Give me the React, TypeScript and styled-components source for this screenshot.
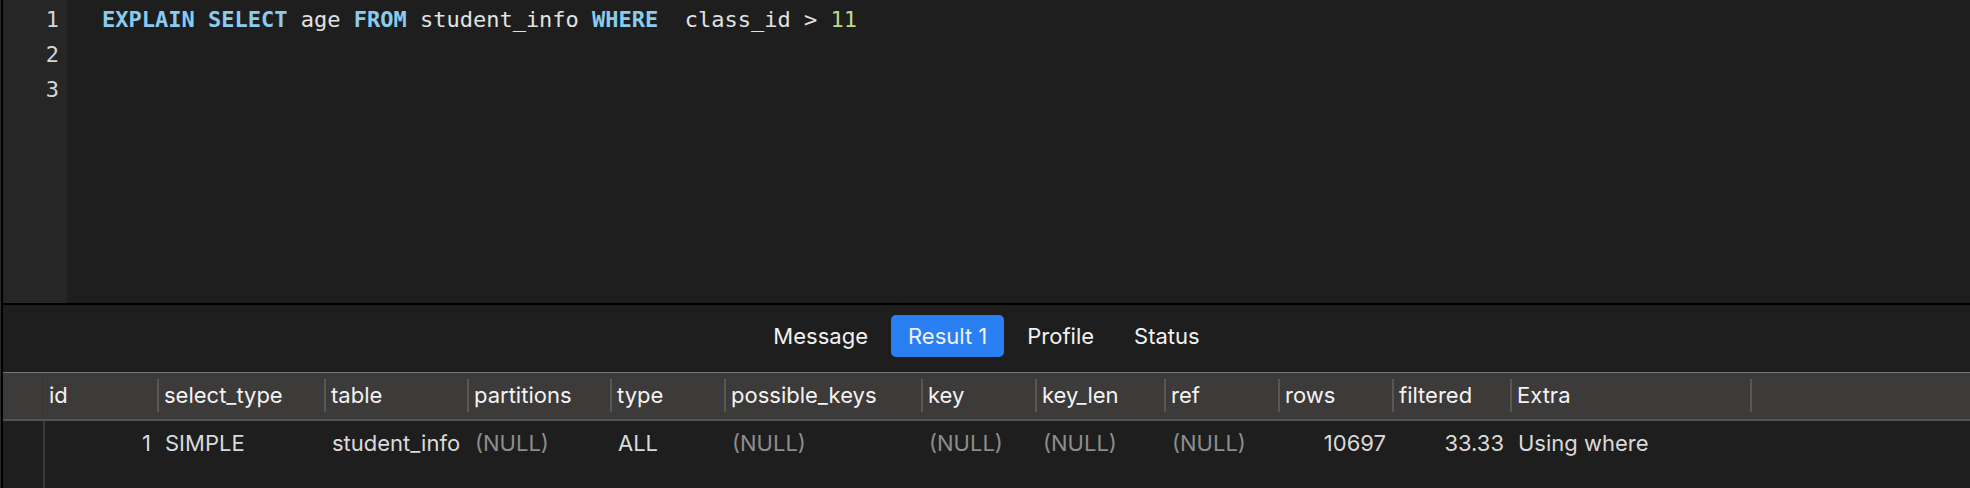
import React from "react";
import styled, { createGlobalStyle } from "styled-components";

const GlobalStyle = createGlobalStyle`
  html, body {
    margin: 0;
    padding: 0;
    background: #1e1e1e;
  }
  * { box-sizing: border-box; }
`;

const Root = styled.div`
  width: 1970px;
  height: 488px;
  padding-left: 1px;
  background: #2b2b2b;
  overflow: hidden;
`;

const Frame = styled.div`
  height: 100%;
  border-left: 2px solid #000;
  display: flex;
  flex-direction: column;
  background: #1e1e1e;
`;

const Editor = styled.div`
  height: 303px;
  display: flex;
  background: #1e1e1e;
  flex-shrink: 0;
`;

const Gutter = styled.div`
  width: 64px;
  background: #262626;
  padding: 2px 8px 0 0;
  text-align: right;
  font-family: "DejaVu Sans Mono", monospace;
  font-size: 22px;
  line-height: 35px;
  color: #d6d6d6;
`;

const Code = styled.div`
  flex: 1;
  padding: 2px 0 0 35px;
  font-family: "DejaVu Sans Mono", monospace;
  font-size: 22px;
  line-height: 35px;
  color: #e2e2e2;
  white-space: pre;
`;

const Kw = styled.span`
  color: #8accee;
  font-weight: bold;
`;

const Num = styled.span`
  color: #b9dc8c;
`;

const Divider = styled.div`
  height: 2px;
  background: #000;
  flex-shrink: 0;
`;

const TabBar = styled.div`
  height: 67px;
  display: flex;
  justify-content: center;
  align-items: flex-start;
  padding-top: 10px;
  gap: 6px;
  flex-shrink: 0;
`;

const Tab = styled.div<{ $active?: boolean }>`
  height: 42px;
  padding: 0 17px;
  border-radius: 5px;
  background: ${(p) => (p.$active ? "#2a7ff3" : "transparent")};
  color: #f1f1f1;
  font-family: Inter, "Liberation Sans", sans-serif;
  font-size: 22px;
  line-height: 42px;
`;

const HeaderRow = styled.div`
  display: flex;
  height: 49px;
  background: #3d3a3a;
  border-top: 1px solid #777575;
  border-bottom: 2px solid #545252;
  flex-shrink: 0;
`;

const HeaderMarker = styled.div`
  width: 40px;
  border-right: 1px solid #383535;
`;

const HeaderCell = styled.div<{ $w?: number; $sep?: boolean; $fill?: boolean }>`
  position: relative;
  width: ${(p) => (p.$w ? `${p.$w}px` : "auto")};
  flex: ${(p) => (p.$fill ? 1 : "none")};
  padding-left: 6px;
  font-family: Inter, "Liberation Sans", sans-serif;
  font-size: 22px;
  line-height: 45px;
  color: #f3f3f3;
  &::before {
    content: "";
    display: ${(p) => (p.$sep ? "block" : "none")};
    position: absolute;
    left: -1px;
    top: 6px;
    width: 2px;
    height: 33px;
    background: #5a5757;
  }
`;

const Body = styled.div`
  flex: 1;
  display: flex;
`;

const RowMarkers = styled.div`
  width: 42px;
  border-right: 2px solid #393939;
`;

const Rows = styled.div`
  flex: 1;
`;

const DataRow = styled.div`
  display: flex;
  height: 42px;
  padding-top: 2px;
`;

const DataCell = styled.div<{ $w: number; $right?: boolean; $null?: boolean }>`
  width: ${(p) => p.$w}px;
  padding: 0 7px 0 7px;
  text-align: ${(p) => (p.$right ? "right" : "left")};
  font-family: Inter, "Liberation Sans", sans-serif;
  font-size: 22px;
  line-height: 40px;
  color: ${(p) => (p.$null ? "#8d8d8d" : "#dadada")};
  white-space: nowrap;
  overflow: hidden;
`;

type Col = { name: string; w: number };

const columns: Col[] = [
  { name: "id", w: 115 },
  { name: "select_type", w: 167 },
  { name: "table", w: 143 },
  { name: "partitions", w: 143 },
  { name: "type", w: 114 },
  { name: "possible_keys", w: 197 },
  { name: "key", w: 114 },
  { name: "key_len", w: 129 },
  { name: "ref", w: 114 },
  { name: "rows", w: 114 },
  { name: "filtered", w: 118 },
  { name: "Extra", w: 240 },
];

type Val = { v: string; right?: boolean; isNull?: boolean };

const row: Val[] = [
  { v: "1", right: true },
  { v: "SIMPLE" },
  { v: "student_info" },
  { v: "(NULL)", isNull: true },
  { v: "ALL" },
  { v: "(NULL)", isNull: true },
  { v: "(NULL)", isNull: true },
  { v: "(NULL)", isNull: true },
  { v: "(NULL)", isNull: true },
  { v: "10697", right: true },
  { v: "33.33", right: true },
  { v: "Using where" },
];

const tabs = ["Message", "Result 1", "Profile", "Status"];

export default function App() {
  return (
    <>
      <GlobalStyle />
      <Root>
        <Frame>
          <Editor>
            <Gutter>
              <div>1</div>
              <div>2</div>
              <div>3</div>
            </Gutter>
            <Code>
              <div>
                <Kw>EXPLAIN</Kw> <Kw>SELECT</Kw> age <Kw>FROM</Kw> student_info{" "}
                <Kw>WHERE</Kw>{"  "}class_id &gt; <Num>11</Num>
              </div>
            </Code>
          </Editor>
          <Divider />
          <TabBar>
            {tabs.map((t) => (
              <Tab key={t} $active={t === "Result 1"}>
                {t}
              </Tab>
            ))}
          </TabBar>
          <HeaderRow>
            <HeaderMarker />
            {columns.map((c, i) => (
              <HeaderCell key={c.name} $w={c.w} $sep={i > 0}>
                {c.name}
              </HeaderCell>
            ))}
            <HeaderCell $fill $sep />
          </HeaderRow>
          <Body>
            <RowMarkers />
            <Rows>
              <DataRow>
                {row.map((c, i) => (
                  <DataCell
                    key={i}
                    $w={i === 0 ? columns[i].w - 2 : columns[i].w}
                    $right={c.right}
                    $null={c.isNull}
                  >
                    {c.v}
                  </DataCell>
                ))}
              </DataRow>
            </Rows>
          </Body>
        </Frame>
      </Root>
    </>
  );
}
